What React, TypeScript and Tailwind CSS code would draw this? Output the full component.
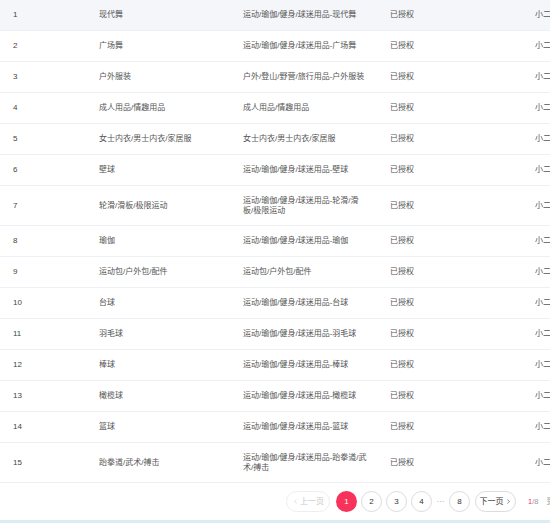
import { ChevronLeft, ChevronRight } from "lucide-react";

const ROWS = [
    { id: 1, name: "现代舞", path: "运动/瑜伽/健身/球迷用品-现代舞" },
    { id: 2, name: "广场舞", path: "运动/瑜伽/健身/球迷用品-广场舞" },
    { id: 3, name: "户外服装", path: "户外/登山/野营/旅行用品-户外服装" },
    { id: 4, name: "成人用品/情趣用品", path: "成人用品/情趣用品" },
    { id: 5, name: "女士内衣/男士内衣/家居服", path: "女士内衣/男士内衣/家居服" },
    { id: 6, name: "壁球", path: "运动/瑜伽/健身/球迷用品-壁球" },
    { id: 7, name: "轮滑/滑板/极限运动", path: "运动/瑜伽/健身/球迷用品-轮滑/滑板/极限运动", tall: true },
    { id: 8, name: "瑜伽", path: "运动/瑜伽/健身/球迷用品-瑜伽" },
    { id: 9, name: "运动包/户外包/配件", path: "运动包/户外包/配件" },
    { id: 10, name: "台球", path: "运动/瑜伽/健身/球迷用品-台球" },
    { id: 11, name: "羽毛球", path: "运动/瑜伽/健身/球迷用品-羽毛球" },
    { id: 12, name: "棒球", path: "运动/瑜伽/健身/球迷用品-棒球" },
    { id: 13, name: "橄榄球", path: "运动/瑜伽/健身/球迷用品-橄榄球" },
    { id: 14, name: "篮球", path: "运动/瑜伽/健身/球迷用品-篮球" },
    { id: 15, name: "跆拳道/武术/搏击", path: "运动/瑜伽/健身/球迷用品-跆拳道/武术/搏击", tall: true },
];

const font = "[font-family:'Liberation_Sans','Noto_Sans_CJK_SC',sans-serif]";
const circle =
    "shrink-0 flex items-center justify-center w-[21px] h-[21px] rounded-full border border-[#dcdcdc]";

export default function App() {
    return (
        <div className={`w-[550px] h-[523px] overflow-hidden bg-white flex flex-col ${font}`}>
            <div className="w-[700px]">
                {ROWS.map((r, i) => (
                    <div
                        key={r.id}
                        className={`grid grid-cols-[86px_144px_147px_145px_120px] items-center pl-[13px] border-b border-[#eef0f4] text-[8px] leading-[10px] text-[#555] ${
                            r.tall ? "h-[40px]" : "h-[31px]"
                        } ${i === 0 ? "bg-[#f4f6fa]" : ""}`}
                    >
                        <span className="text-[8px] text-[#444]">{r.id}</span>
                        <span>{r.name}</span>
                        <span className="w-[125px]">{r.path}</span>
                        <span>已授权</span>
                        <span>小二</span>
                    </div>
                ))}
            </div>

            <div className="flex-1 w-[700px] flex items-center pl-[286px] text-[8px] text-[#333] whitespace-nowrap">
                <span className="shrink-0 flex items-center justify-center w-[44px] h-[21px] rounded-full border border-[#eeeeee] text-[#c8c8c8]">
                    <ChevronLeft className="w-[7px] h-[7px] mr-[1px]" strokeWidth={2} />
                    上一页
                </span>
                <span className="ml-[6px] shrink-0 flex items-center justify-center w-[21px] h-[21px] rounded-full bg-[#f7325b] text-white">
                    1
                </span>
                {[2, 3, 4].map((n) => (
                    <span key={n} className={`ml-[4px] ${circle}`}>
                        {n}
                    </span>
                ))}
                <span className="w-[17px] shrink-0 text-center text-[#999]">···</span>
                <span className={circle}>8</span>
                <span className="ml-[5px] shrink-0 flex items-center justify-center w-[41px] h-[21px] rounded-full border border-[#dcdcdc]">
                    下一页
                    <ChevronRight className="w-[7px] h-[7px] ml-[1px]" strokeWidth={2} />
                </span>
                <span className="ml-[12px] shrink-0 text-[7.5px] text-[#999]">
                    <span className="text-[#f7325b]">1</span>/8
                </span>
                <span className="ml-[8px] shrink-0 text-[7.5px] text-[#999]">到第</span>
            </div>
            <div className="h-[3px] bg-[#d9edf2]" />
        </div>
    );
}
